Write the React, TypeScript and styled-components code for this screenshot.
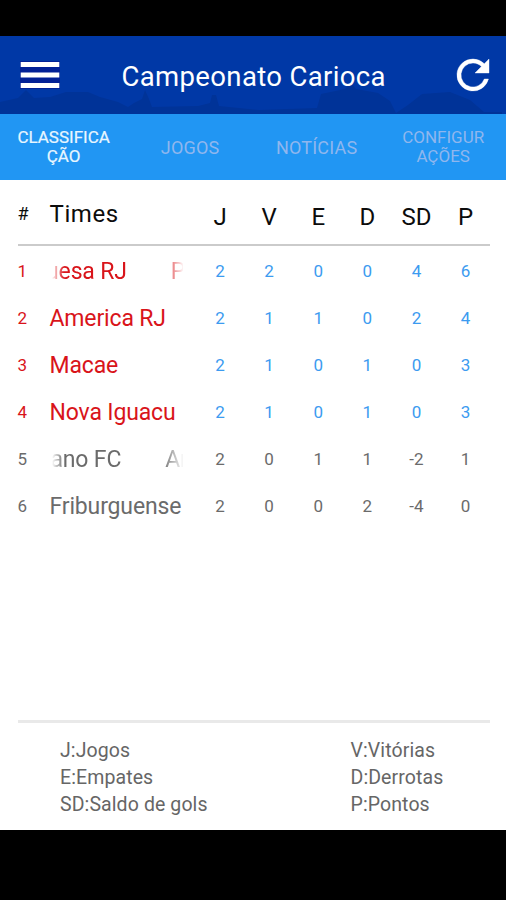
import React from 'react';
import styled, { createGlobalStyle } from 'styled-components';

const GlobalStyle = createGlobalStyle`
  * { box-sizing: border-box; }
  body { margin: 0; background: #000; font-family: Roboto, "Liberation Sans", sans-serif; }
`;

const Screen = styled.div`
  width: 506px;
  height: 900px;
  padding: 36px 0 70px;
  background: #000;
  display: flex;
  flex-direction: column;
  overflow: hidden;
`;

const Header = styled.header`
  position: relative;
  height: 78px;
  flex: none;
  display: flex;
  align-items: center;
  justify-content: space-between;
  padding: 0 9px 0 20px;
  background: #0038a6;
  color: #fff;
`;

const Skyline = styled.svg`
  position: absolute;
  left: 0;
  bottom: 0;
  width: 506px;
  height: 30px;
  fill: #00308f;
  opacity: 0.6;
`;

const IconButton = styled.button`
  position: relative;
  display: flex;
  padding: 0;
  border: 0;
  background: none;
  color: #fff;
`;

const MenuIcon = styled.svg`
  width: 40px;
  height: 28px;
`;

const RefreshIcon = styled.svg`
  width: 48px;
  height: 48px;
  fill: #fff;
`;

const Title = styled.h1`
  position: relative;
  flex: 1;
  margin: 3px 0 0 61.5px;
  font-size: 27.5px;
  font-weight: 400;
  line-height: 32px;
  letter-spacing: 0.36px;
  white-space: nowrap;
`;

const Tabs = styled.nav`
  height: 66px;
  flex: none;
  display: grid;
  grid-template-columns: repeat(4, 126.5px);
  align-items: center;
  padding-left: 0.4px;
  background: #2196f3;
`;

const Tab = styled.div<{ $active?: boolean; $small?: boolean }>`
  text-align: center;
  font-size: ${(p) => (p.$small ? 17 : 18)}px;
  line-height: 19px;
  letter-spacing: ${(p) => (p.$small ? 0 : 0.2)}px;
  color: ${(p) => (p.$active ? '#e8f6ff' : '#8fb6ee')};
  -webkit-text-stroke: ${(p) => (p.$active ? '0.2px #e8f6ff' : '0')};
`;

const Body = styled.main`
  flex: 1;
  display: flex;
  flex-direction: column;
  padding: 0 16px 0 17.5px;
  background: #fff;
`;

const columns = '32px 133px 13px repeat(6, 49.1px)';

const HeadRow = styled.div`
  display: grid;
  grid-template-columns: ${columns};
  align-items: center;
  height: 66px;
  flex: none;
  padding-top: 3px;
  border-bottom: 2px solid #cbcbcb;
  color: #0c0c0c;
`;

const HeadMark = styled.span`
  font-size: 18px;
  line-height: 20px;
`;

const HeadTeam = styled.span`
  grid-column: 2 / 4;
  padding-top: 1px;
  font-size: 24px;
  line-height: 28px;
  letter-spacing: 0.6px;
`;

const HeadStat = styled.span`
  padding-top: 7px;
  text-align: center;
  font-size: 24px;
  line-height: 28px;
`;

const Rows = styled.div`
  padding-top: 1px;
`;

const Row = styled.div<{ $top: boolean }>`
  display: grid;
  grid-template-columns: ${columns};
  align-items: center;
  height: 47.1px;
  color: ${(p) => (p.$top ? '#d9141a' : '#6b6b6b')};
`;

const Position = styled.span`
  font-size: 17px;
  line-height: 20px;
`;

const TeamCell = styled.div<{ $scrolling: boolean }>`
  grid-column: 2;
  margin-top: 2px;
  overflow: ${(p) => (p.$scrolling ? 'hidden' : 'visible')};
  white-space: nowrap;
  font-size: 23px;
  line-height: 30px;
  letter-spacing: -0.15px;
  mask-image: ${(p) =>
    p.$scrolling
      ? 'linear-gradient(90deg, transparent 2px, #000 14px, #000 112px, transparent 134px)'
      : 'none'};
`;

const Marquee = styled.div<{ $shift: number }>`
  display: flex;
  gap: 44px;
  width: max-content;
  margin-left: -${(p) => p.$shift}px;
`;

const Stat = styled.span<{ $top: boolean }>`
  text-align: center;
  font-size: 17px;
  line-height: 20px;
  color: ${(p) => (p.$top ? '#3c9bf0' : '#6b6b6b')};

  &:nth-child(3) {
    grid-column: 4;
  }
`;

const Legend = styled.footer`
  display: grid;
  grid-template-columns: 290.5px 1fr;
  grid-auto-rows: 27px;
  align-items: center;
  height: 110px;
  margin-top: auto;
  padding: 14px 0 0 42.5px;
  border-top: 3px solid #e9e9e9;
  font-size: 19.5px;
  line-height: 27px;
  letter-spacing: 0.1px;
  color: #666;
`;

const teams = [
  { name: 'Portuguesa RJ', shift: 71.5, stats: [2, 2, 0, 0, 4, 6] },
  { name: 'America RJ', stats: [2, 1, 1, 0, 2, 4] },
  { name: 'Macae', stats: [2, 1, 0, 1, 0, 3] },
  { name: 'Nova Iguacu', stats: [2, 1, 0, 1, 0, 3] },
  { name: 'Americano FC', shift: 71, stats: [2, 0, 1, 1, -2, 1] },
  { name: 'Friburguense', stats: [2, 0, 0, 2, -4, 0] },
];

const statHeads = ['J', 'V', 'E', 'D', 'SD', 'P'];
const legend = ['J:Jogos', 'V:Vitórias', 'E:Empates', 'D:Derrotas', 'SD:Saldo de gols', 'P:Pontos'];

export default function App() {
  return (
    <>
      <GlobalStyle />
      <Screen>
        <Header>
          <Skyline viewBox="0 0 506 30">
            <path d="M0 18 18 14l8-8 8 8 16-1 16-5 22 0 12 5 18 5 10 5 6-4 8-4 3-9 4 9 3 8 46-1 12-3 2-8h4l3 11 40 4 58-2 4-14 24-5 6-6 5 6 22 4 12 8 6 12 12-8 14-11 28-2 20 8 14 12 18 0v8H0z" />
          </Skyline>
          <IconButton aria-label="Menu">
            <MenuIcon viewBox="0 0 40 28">
              <path d="M0 0h40v28H0z" fill="#04128c" opacity=".6" />
              <path d="M.7 1h38.6v5H.7zM.7 11.5h38.6v5H.7zM.7 22h38.6v5H.7z" fill="#fff" />
            </MenuIcon>
          </IconButton>
          <Title>Campeonato Carioca</Title>
          <IconButton aria-label="Atualizar">
            <RefreshIcon viewBox="0 0 24 24">
              <path
                d="M17.65 6.35A7.96 7.96 0 0 0 12 4a8 8 0 1 0 7.73 10h-2.08A6 6 0 1 1 12 6c1.66 0 3.14.69 4.22 1.78L13 11h7V4z"
                stroke="#fff"
                strokeWidth=".2"
              />
            </RefreshIcon>
          </IconButton>
        </Header>
        <Tabs>
          <Tab $active $small>CLASSIFICA<br />ÇÃO</Tab>
          <Tab>JOGOS</Tab>
          <Tab>NOTÍCIAS</Tab>
          <Tab $small>CONFIGUR<br />AÇÕES</Tab>
        </Tabs>
        <Body>
          <HeadRow>
            <HeadMark>#</HeadMark>
            <HeadTeam>Times</HeadTeam>
            {statHeads.map((h) => (
              <HeadStat key={h}>{h}</HeadStat>
            ))}
          </HeadRow>
          <Rows>
            {teams.map((team, i) => (
              <Row key={team.name} $top={i < 4}>
                <Position>{i + 1}</Position>
                <TeamCell $scrolling={!!team.shift}>
                  {team.shift ? (
                    <Marquee $shift={team.shift}>
                      <span>{team.name}</span>
                      <span>{team.name}</span>
                    </Marquee>
                  ) : (
                    team.name
                  )}
                </TeamCell>
                {team.stats.map((value, k) => (
                  <Stat key={k} $top={i < 4}>{value}</Stat>
                ))}
              </Row>
            ))}
          </Rows>
          <Legend>
            {legend.map((item) => (
              <span key={item}>{item}</span>
            ))}
          </Legend>
        </Body>
      </Screen>
    </>
  );
}
